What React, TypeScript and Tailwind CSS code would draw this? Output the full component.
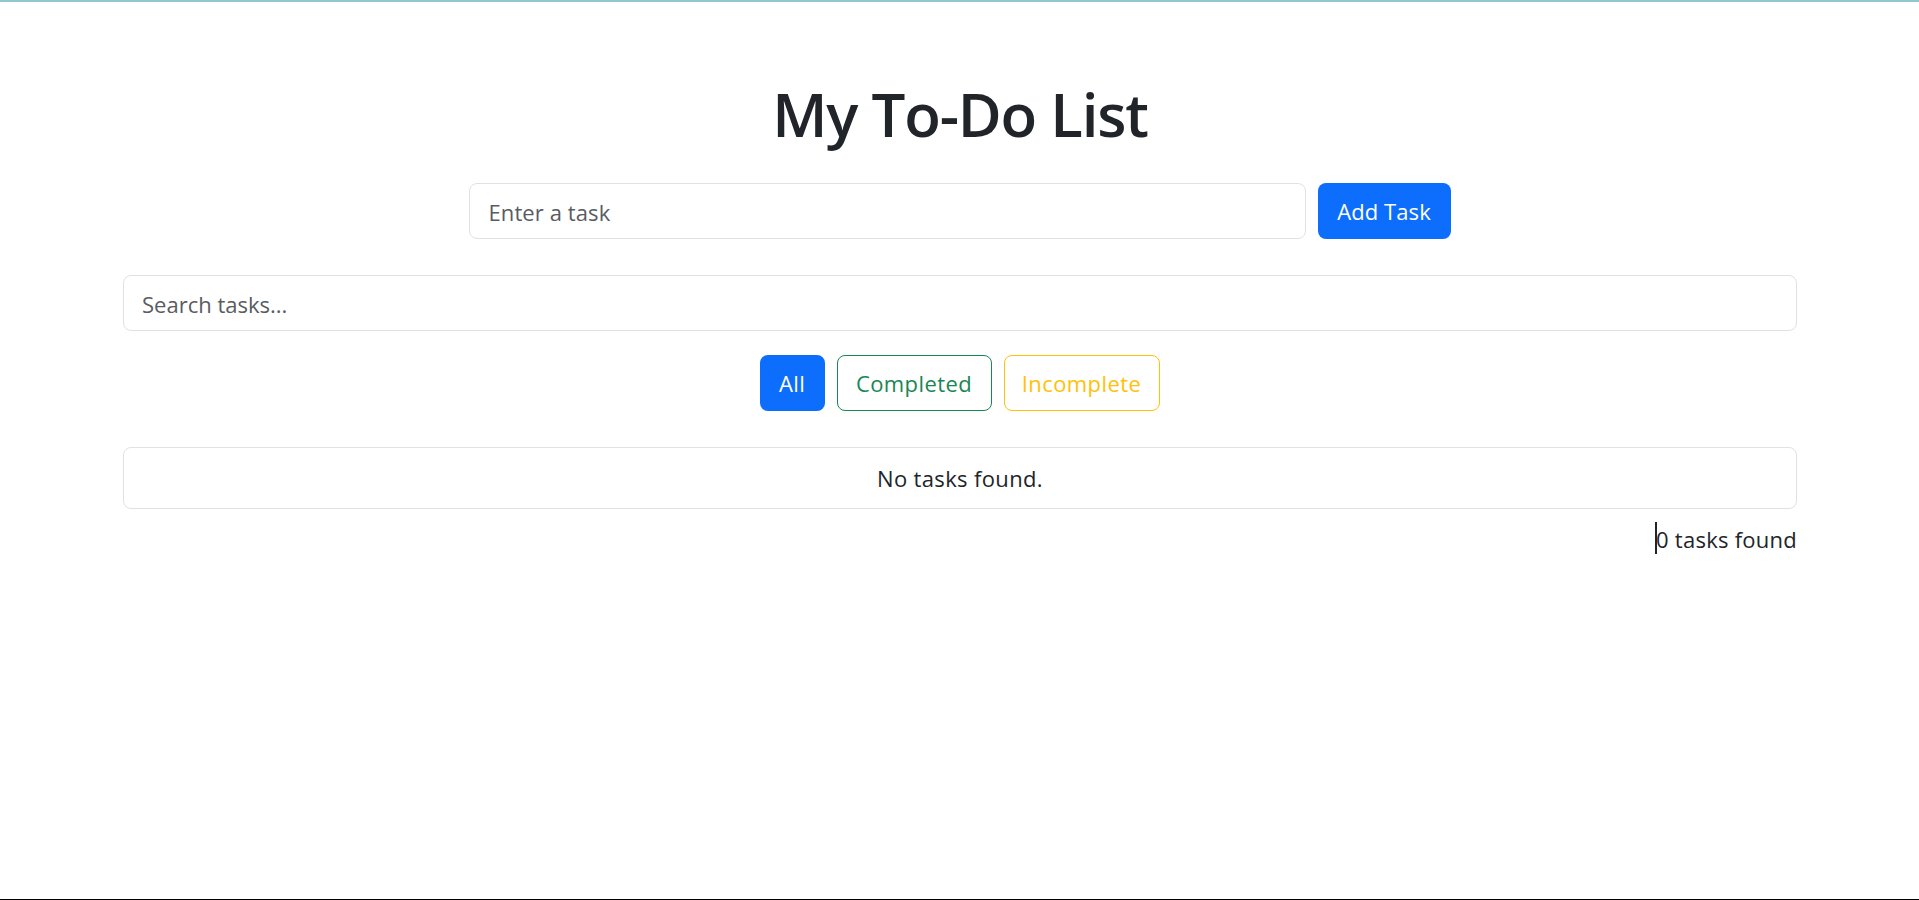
export default function App() {
  return (
    <div className="h-[900px] flex flex-col overflow-hidden bg-white text-[#212529] font-['Open_Sans','Noto_Sans',sans-serif]">
      <div className="h-[2px] bg-[#8fc9cf]" />
      <main className="flex-1 pl-[123px] pr-[122px]">
        <h1 className="mt-[76px] text-center text-[60px] leading-[72px] font-semibold tracking-[-1.2px]">My To-Do List</h1>

        <form className="mt-[33px] flex justify-center gap-3 pr-px" onSubmit={(e) => e.preventDefault()}>
          <input
            type="text"
            placeholder="Enter a task"
            className="h-14 w-[837px] rounded-lg border border-[#dee2e6] pl-[19px] pr-[19px] pt-px text-[22px] tracking-[0.1px] outline-none placeholder:text-[#595c5f]"
          />
          <button className="h-14 w-[133px] rounded-lg bg-[#0d6efd] pt-px text-[22px] tracking-[0.1px] text-white">Add Task</button>
        </form>

        <input
          type="text"
          placeholder="Search tasks..."
          className="mt-9 block h-14 w-full rounded-lg border border-[#dee2e6] pl-[18px] pr-[19px] pt-px text-[22px] outline-none placeholder:text-[#595c5f]"
        />

        <div className="mt-6 flex justify-center gap-3 pr-px text-[22px] tracking-[0.4px]">
          <button className="h-14 w-[65px] rounded-lg bg-[#0d6efd] pt-px text-white">All</button>
          <button className="h-14 w-[155px] rounded-lg border border-[#198754] pt-px text-[#198754]">Completed</button>
          <button className="h-14 w-[156px] rounded-lg border border-[#ffc107] pt-px text-[#ffc107]">Incomplete</button>
        </div>

        <ul className="mt-9">
          <li className="flex h-[62px] items-center justify-center rounded-lg border border-[#dee2e6] text-[22px] tracking-[0.35px]">No tasks found.</li>
        </ul>

        <p className="mt-[13px] text-right text-[22px] leading-[32px] tracking-[0.25px]">
          <span className="relative inline-block pt-px">
            <span className="absolute -left-px top-0 h-8 w-[2px] bg-[#212529]" />
            0 tasks found
          </span>
        </p>
      </main>
      <div className="h-px bg-black" />
    </div>
  )
}
